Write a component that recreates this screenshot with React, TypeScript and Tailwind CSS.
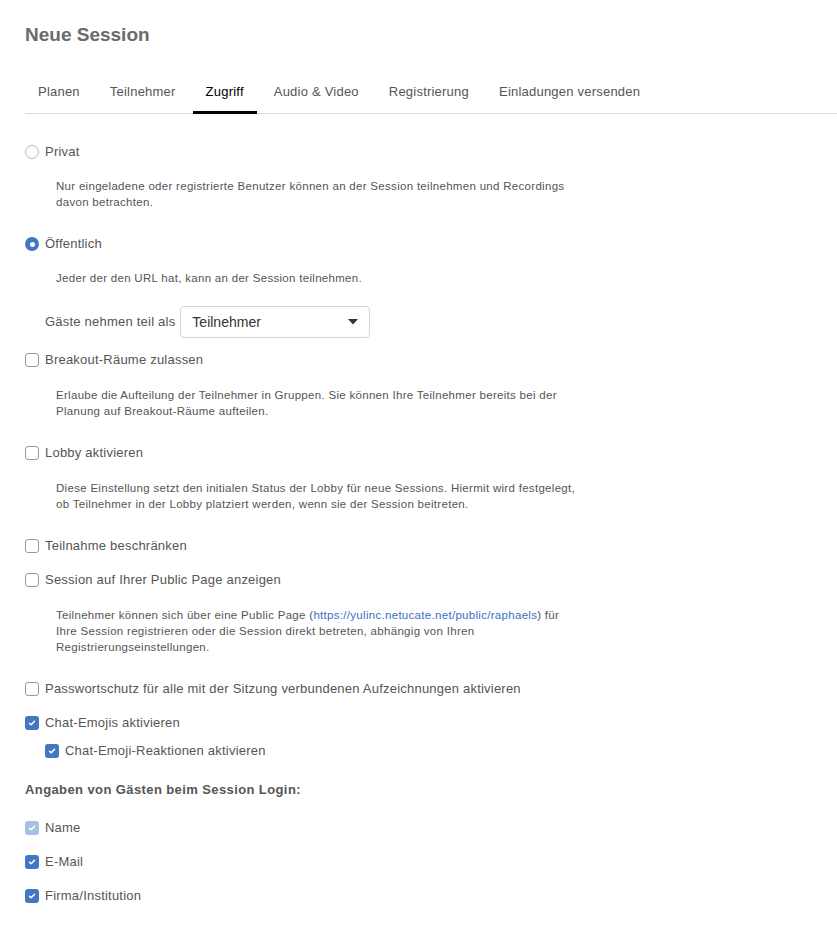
import React from "react";

const font = { fontFamily: '"Liberation Sans", Arial, sans-serif' };

function Check({ checked = false, disabled = false }: { checked?: boolean; disabled?: boolean }) {
  if (checked) {
    return (
      <span
        className={`flex h-[14px] w-[14px] shrink-0 items-center justify-center rounded-[3px] ${
          disabled ? "bg-[#a9c0e3]" : "bg-[#4377c4]"
        }`}
      >
        <svg width="8" height="8" viewBox="0 0 8 8" fill="none">
          <path d="M1.5 4.2 L3.2 5.8 L6.5 2.3" stroke="white" strokeWidth="1.5" strokeLinecap="round" strokeLinejoin="round" />
        </svg>
      </span>
    );
  }
  return <span className="h-[14px] w-[14px] shrink-0 rounded-[3px] border border-[#9a9a9a] bg-white" />;
}

function Radio({ checked = false }: { checked?: boolean }) {
  if (checked) {
    return (
      <span className="flex h-[14px] w-[14px] shrink-0 items-center justify-center rounded-full bg-[#4377c4]">
        <span className="h-[5px] w-[5px] rounded-full bg-white" />
      </span>
    );
  }
  return <span className="h-[14px] w-[14px] shrink-0 rounded-full border border-[#b5b5b5] bg-white" />;
}

function Row({ children, control, className = "" }: { children: React.ReactNode; control: React.ReactNode; className?: string }) {
  return (
    <div className={`flex h-[20px] items-center gap-[6px] text-[13px] leading-[20px] tracking-[0.22px] text-[#555] ${className}`}>
      {control}
      <span>{children}</span>
    </div>
  );
}

function Desc({ children, className = "" }: { children: React.ReactNode; className?: string }) {
  return <p className={`pl-[31px] text-[11.5px] leading-[16px] tracking-[0.3px] text-[#555] ${className}`}>{children}</p>;
}

export default function App() {
  const tabs = ["Planen", "Teilnehmer", "Zugriff", "Audio & Video", "Registrierung", "Einladungen versenden"];
  return (
    <div style={font} className="min-h-[939px] w-[837px] bg-white pl-[25px]">
      <h1 className="pt-[21px] text-[19px] font-semibold leading-[28px] text-[#6b6b6b]">Neue Session</h1>
      <div className="mt-[33px] flex gap-[4px] border-b border-[#dcdcdc]">
        {tabs.map((t) => (
          <div
            key={t}
            className={`-mb-px px-[13px] pb-[9px] text-[13px] leading-[20px] tracking-[0.22px] ${
              t === "Zugriff" ? "border-b-[3px] border-black text-black" : "border-b-[3px] border-transparent text-[#555]"
            }`}
          >
            {t}
          </div>
        ))}
      </div>

      <div className="flex flex-col">
        <Row control={<Radio />} className="mt-[28px]">Privat</Row>
        <Desc className="mt-[16px]">
          Nur eingeladene oder registrierte Benutzer können an der Session teilnehmen und Recordings
          <br />
          davon betrachten.
        </Desc>

        <Row control={<Radio checked />} className="mt-[24px]">Öffentlich</Row>
        <Desc className="mt-[16px]">Jeder der den URL hat, kann an der Session teilnehmen.</Desc>

        <div className="mt-[20px] flex items-center gap-[5px] pl-[20px]">
          <span className="text-[13px] tracking-[0.22px] text-[#555]">Gäste nehmen teil als</span>
          <div className="flex h-[32px] w-[190px] items-center justify-between rounded-[4px] border border-[#d4d4d4] bg-white pl-[11px] pr-[11px]">
            <span className="text-[14px] text-[#333]">Teilnehmer</span>
            <svg width="10" height="6" viewBox="0 0 10 6">
              <path d="M0 0 L10 0 L5 5.5 Z" fill="#333" />
            </svg>
          </div>
        </div>

        <Row control={<Check />} className="mt-[12px]">Breakout-Räume zulassen</Row>
        <Desc className="mt-[17px]">
          Erlaube die Aufteilung der Teilnehmer in Gruppen. Sie können Ihre Teilnehmer bereits bei der
          <br />
          Planung auf Breakout-Räume aufteilen.
        </Desc>

        <Row control={<Check />} className="mt-[24px]">Lobby aktivieren</Row>
        <Desc className="mt-[17px]">
          Diese Einstellung setzt den initialen Status der Lobby für neue Sessions. Hiermit wird festgelegt,
          <br />
          ob Teilnehmer in der Lobby platziert werden, wenn sie der Session beitreten.
        </Desc>

        <Row control={<Check />} className="mt-[24px]">Teilnahme beschränken</Row>
        <Row control={<Check />} className="mt-[14px]">Session auf Ihrer Public Page anzeigen</Row>
        <Desc className="mt-[17px]">
          Teilnehmer können sich über eine Public Page (
          <span className="text-[#3a6fc4]">https://yulinc.netucate.net/public/raphaels</span>) für
          <br />
          Ihre Session registrieren oder die Session direkt betreten, abhängig von Ihren
          <br />
          Registrierungseinstellungen.
        </Desc>

        <Row control={<Check />} className="mt-[24px]">Passwortschutz für alle mit der Sitzung verbundenen Aufzeichnungen aktivieren</Row>
        <Row control={<Check checked />} className="mt-[14px]">Chat-Emojis aktivieren</Row>
        <Row control={<Check checked />} className="mt-[8px] pl-[20px]">Chat-Emoji-Reaktionen aktivieren</Row>

        <h2 className="mt-[19px] text-[13px] font-bold leading-[20px] tracking-[0.4px] text-[#555]">Angaben von Gästen beim Session Login:</h2>

        <Row control={<Check checked disabled />} className="mt-[18px]">Name</Row>
        <Row control={<Check checked />} className="mt-[14px]">E-Mail</Row>
        <Row control={<Check checked />} className="mt-[14px]">Firma/Institution</Row>
      </div>
    </div>
  );
}
